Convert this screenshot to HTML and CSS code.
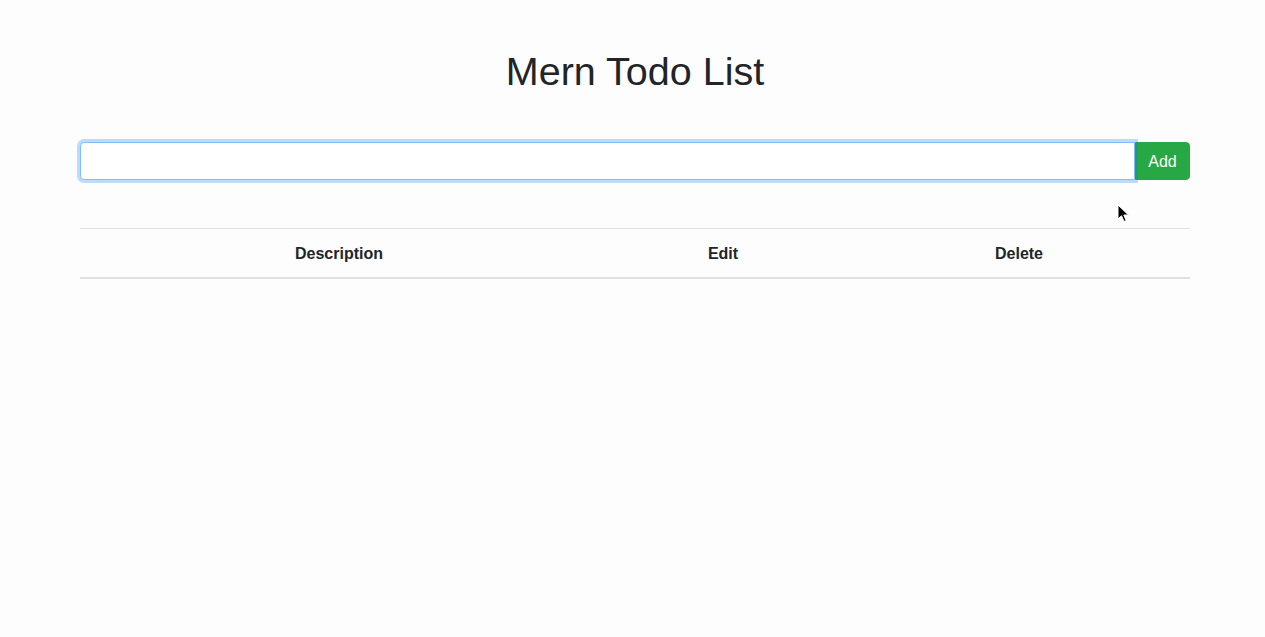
FILE: index.html
```html
<!DOCTYPE html>
<html>
<head>
<meta charset="utf-8">
<title>Mern Todo List</title>
<link rel="stylesheet" href="styles.css">
</head>
<body>
<div class="container">
  <h1 class="title">Mern Todo List</h1>
  <form class="input-group">
    <input class="form-control" type="text">
    <button class="btn-add" type="button">Add</button>
  </form>
  <table class="table">
    <thead>
      <tr>
        <th class="col-desc">Description</th>
        <th class="col-edit">Edit</th>
        <th class="col-del">Delete</th>
      </tr>
    </thead>
    <tbody></tbody>
  </table>
</div>
<svg class="cursor" width="14" height="20" viewBox="0 0 14 20">
  <path d="M1 1 L1 15 L4.5 11.8 L7 17.5 L9.2 16.5 L6.8 11 L11.5 11 Z" fill="#000" stroke="#fff" stroke-width="1"/>
</svg>
</body>
</html>
```
FILE: styles.css
```css
html, body {
  margin: 0;
  padding: 0;
  background: #fdfdfd;
  color: #212529;
  font-family: "Liberation Sans", Arial, sans-serif;
  font-size: 16px;
}
.container {
  width: 1110px;
  margin: 0 0 0 80px;
  padding-top: 47px;
}
.title {
  margin: 0 0 47px;
  font-size: 39.5px;
  font-weight: 400;
  line-height: 48px;
  text-align: center;
  color: #212529;
}
.input-group {
  display: flex;
  margin: 0 0 48px;
}
.form-control {
  flex: 1;
  height: 38px;
  box-sizing: border-box;
  border: 1px solid #80bdff;
  border-radius: 4px 0 0 4px;
  box-shadow: 0 0 0 3px rgba(0, 123, 255, 0.25);
  background: #fff;
  outline: none;
  padding: 6px 12px;
  font-size: 16px;
  font-family: inherit;
  position: relative;
  z-index: 1;
}
.btn-add {
  width: 55px;
  height: 38px;
  border: 1px solid #28a745;
  background: #28a745;
  color: #fff;
  border-radius: 0 4px 4px 0;
  font-size: 16px;
  font-family: inherit;
  padding: 1px 0 0;
}
.table {
  width: 100%;
  border-collapse: collapse;
}
.table th {
  border-top: 1px solid #dee2e6;
  border-bottom: 2px solid #dee2e6;
  padding: 13px 12px 11px;
  line-height: 24px;
  font-weight: 700;
  text-align: center;
}
.col-desc { width: 494px; }
.col-edit { width: 226px; }
.col-del { width: 318px; }
.cursor {
  position: absolute;
  left: 1117px;
  top: 204px;
}
```
